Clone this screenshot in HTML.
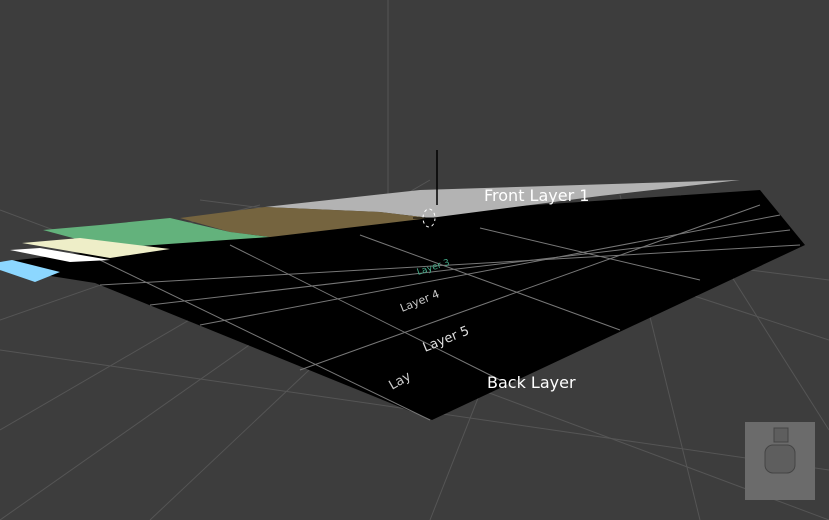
<!DOCTYPE html>
<html><head><style>
html,body{margin:0;padding:0;background:#3d3d3d;width:829px;height:520px;overflow:hidden}
svg{display:block}
text{font-family:"DejaVu Sans","Liberation Sans",sans-serif}
</style></head><body>
<svg width="829" height="520" viewBox="0 0 829 520">
<rect width="829" height="520" fill="#3d3d3d"/>
<g stroke="#555" stroke-width="1" fill="none">
<line x1="0" y1="430" x2="430" y2="180"/>
<line x1="0" y1="320" x2="330" y2="205"/>
<line x1="0" y1="270" x2="260" y2="205"/>
<line x1="0" y1="520" x2="470" y2="190"/>
<line x1="150" y1="520" x2="500" y2="190"/>
<line x1="430" y1="520" x2="560" y2="190"/>
<line x1="700" y1="520" x2="620" y2="195"/>
<line x1="829" y1="430" x2="680" y2="195"/>
<line x1="0" y1="210" x2="829" y2="520"/>
<line x1="0" y1="350" x2="829" y2="470"/>
<line x1="400" y1="200" x2="829" y2="340"/>
<line x1="200" y1="200" x2="829" y2="280"/>
<line x1="388" y1="0" x2="388" y2="200"/>
</g>
<polygon points="0,262 270,232 430,212 760,190 805,245 432,420 95,283 0,268" fill="#000"/>
<g stroke="#777" stroke-width="1" fill="none">
<line x1="100" y1="285" x2="800" y2="245"/>
<line x1="150" y1="305" x2="790" y2="230"/>
<line x1="200" y1="325" x2="780" y2="215"/>
<line x1="300" y1="370" x2="760" y2="205"/>
<line x1="100" y1="260" x2="430" y2="420"/>
<line x1="230" y1="245" x2="500" y2="380"/>
<line x1="360" y1="235" x2="620" y2="330"/>
<line x1="480" y1="228" x2="700" y2="280"/>
</g>
<polygon points="265,207 420,190 740,180 600,196 430,218 380,212" fill="#b3b3b3"/>
<polygon points="180,218 265,207 380,212 430,218 270,237 230,232" fill="#75643f"/>
<polygon points="43,230 100,225 170,218 230,232 270,237 110,248" fill="#63b27c"/>
<polygon points="22,243 80,238 170,249 110,258" fill="#eeeec8"/>
<polygon points="10,250 40,248 110,260 70,262" fill="#fff"/>
<polygon points="0,262 12,260 60,272 35,282 0,270" fill="#8cd7ff"/>
<line x1="437" y1="150" x2="437" y2="205" stroke="#000" stroke-width="1.5"/>
<ellipse cx="429" cy="218" rx="6" ry="9" fill="none" stroke="#fff" stroke-width="1" stroke-dasharray="3,3"/>
<line x1="413" y1="218" x2="445" y2="218" stroke="#000"/>
<text x="484" y="201" fill="#fff" font-size="16">Front Layer 1</text>
<text x="487" y="388" fill="#fff" font-size="16">Back Layer</text>
<text x="425" y="352" fill="#ddd" font-size="13" transform="rotate(-22 425 352)">Layer 5</text>
<text x="402" y="312" fill="#ccc" font-size="11" transform="rotate(-22 402 312)">Layer 4</text>
<text x="418" y="275" fill="#4a8" font-size="9" transform="rotate(-18 418 275)">Layer 3</text>
<text x="392" y="390" fill="#ccc" font-size="13" transform="rotate(-30 392 390)">Lay</text>
<rect x="745" y="422" width="70" height="78" fill="#6b6b6b"/>
<rect x="765" y="445" width="30" height="28" rx="8" fill="#5e5e5e" stroke="#444"/>
<rect x="774" y="428" width="14" height="14" fill="#5e5e5e" stroke="#444"/>
</svg>
</body></html>
